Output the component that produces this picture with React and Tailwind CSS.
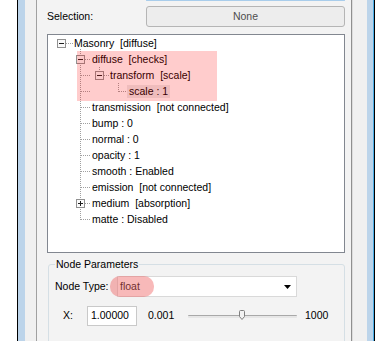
import React from "react";

const rows = [
  { lvl: 0, text: "Masonry  [diffuse]" },
  { lvl: 1, text: "diffuse  [checks]" },
  { lvl: 2, text: "transform  [scale]" },
  { lvl: 3, text: "scale : 1", selected: true },
  { lvl: 1, text: "transmission  [not connected]" },
  { lvl: 1, text: "bump : 0" },
  { lvl: 1, text: "normal : 0" },
  { lvl: 1, text: "opacity : 1" },
  { lvl: 1, text: "smooth : Enabled" },
  { lvl: 1, text: "emission  [not connected]" },
  { lvl: 1, text: "medium  [absorption]" },
  { lvl: 1, text: "matte : Disabled" },
];

const indent = ["pl-[24px]", "pl-[42px]", "pl-[60px]", "pl-[79px]"];

// expand / collapse box of the tree
const Box = ({ cx, cy, plus }) => (
  <g>
    <rect x={cx - 3.5} y={cy - 3.5} width="8" height="8" fill="#fafafa" stroke="#919191" />
    <line x1={cx - 2} x2={cx + 3} y1={cy + 0.5} y2={cy + 0.5} stroke="#1e1e1e" />
    {plus && <line x1={cx + 0.5} x2={cx + 0.5} y1={cy - 2} y2={cy + 3} stroke="#1e1e1e" />}
  </g>
);

const TreeLines = () => {
  const h = (x1, x2, y) => (
    <line key={`h${x1}-${y}`} x1={x1} x2={x2} y1={y + 0.5} y2={y + 0.5} />
  );
  const v = (x, y1, y2) => (
    <line key={`v${x}-${y1}`} x1={x + 0.5} x2={x + 0.5} y1={y1} y2={y2} />
  );
  const level1 = [];
  for (let i = 1; i < 12; i++) {
    const boxed = i === 1 || i === 10;
    level1.push(h(boxed ? 37 : 33, 43, 16 * i + 8));
  }
  return (
    <svg className="absolute left-0 top-0" width="296" height="217">
      <g stroke="#a0a0a0" strokeDasharray="1 1" shapeRendering="crispEdges">
        {h(18, 25, 8)}
        {v(32, 14, 185)}
        {level1}
        {v(51, 32, 41)}
        {h(56, 61, 40)}
        {v(70, 48, 57)}
        {h(71, 79, 56)}
      </g>
      <g shapeRendering="crispEdges">
        <Box cx={13} cy={8} />
        <Box cx={32} cy={24} />
        <Box cx={51} cy={40} />
        <Box cx={32} cy={168} plus />
      </g>
    </svg>
  );
};

const Thumb = () => (
  <svg className="absolute left-[51px] top-[4px]" width="7" height="10">
    <path
      d="M0.5 1.5 Q0.5 0.5 1.5 0.5 H4.5 Q5.5 0.5 5.5 1.5 V6.5 L3 9.5 L0.5 6.5 Z"
      fill="#f2f2f2"
      stroke="#7f7f7f"
    />
  </svg>
);

export default function App() {
  return (
    <div className="w-[387px] h-[341px] overflow-hidden flex bg-white text-black font-['Liberation_Sans',Arial,sans-serif] text-[10.5px]">
      <div className="w-[17px] shrink-0" />
      <div className="w-px shrink-0 bg-black" />
      <div className="w-[7px] shrink-0 bg-[#bcd4ea]" />
      <div className="w-[11px] shrink-0 bg-[#f0f0f0]" />
      <div className="w-px shrink-0 bg-[#a0a0a0]" />

      <div className="w-[314px] shrink-0 bg-[#f3f3f3] pl-[10px] pr-[6px] flex flex-col">
        <div className="ml-[99px] w-[199px] h-[3px] border-x border-b border-[#a9cdeb] rounded-b-[2px] bg-white" />

        <div className="mt-[5px] flex items-center h-[21px]">
          <span className="w-[99px]">Selection:</span>
          <div className="w-[199px] h-[21px] border border-[#b5b5b5] rounded-[3px] bg-[#ededed] flex items-center justify-center text-[#4d4d4d]">
            None
          </div>
        </div>

        <div className="mt-[7px] w-[298px] h-[219px] shrink-0 border border-[#828790] bg-white">
          <div className="relative">
            <TreeLines />
            <div className="relative">
              {rows.map((r, i) => (
                <div key={i} className={`h-[16px] flex items-center ${indent[r.lvl]}`}>
                  <span
                    className={`leading-[13px] px-[2px] whitespace-pre ${r.selected ? "bg-[#ececec]" : ""}`}
                  >
                    {r.text}
                  </span>
                </div>
              ))}
            </div>
            <div className="absolute left-[29px] top-[16px] w-[140px] h-[50px] bg-[rgba(255,0,0,0.2)] pointer-events-none" />
          </div>
        </div>

        <fieldset className="mt-[5px] ml-px w-[297px] h-[100px] shrink-0 border border-[#d5dfe5] rounded-[3px] pl-[6px]">
          <legend className="px-px leading-[13px]">Node Parameters</legend>

          <div className="mt-[5px] flex items-center h-[21px] relative">
            <span className="w-[62px]">Node Type:</span>
            <div className="w-[180px] h-[21px] border border-[#d9d9d9] bg-white flex items-center pl-[2px]">
              <span>float</span>
              <svg className="ml-auto mr-[5px]" width="7" height="4">
                <path d="M0 0 H7 L3.5 4 Z" fill="#000" />
              </svg>
            </div>
            <div className="absolute left-[55px] top-0 w-[44px] h-[21px] rounded-[10px] bg-[rgba(240,100,100,0.45)] pointer-events-none" />
          </div>

          <div className="mt-[9px] flex items-center h-[20px]">
            <span className="w-[32px] pl-[8px]">X:</span>
            <div className="w-[50px] h-[20px] border border-[#c9c9c9] bg-white flex items-center pl-[3px]">
              1.00000
            </div>
            <span className="ml-[11px] w-[29px]">0.001</span>
            <div className="ml-[11px] w-[109px] h-[20px] relative flex items-center">
              <div className="w-full h-[3px] border-t border-[#a8a8a8] bg-[#e6e6e6] rounded-[1px]" />
              <Thumb />
            </div>
            <span className="ml-[8px]">1000</span>
          </div>
        </fieldset>
      </div>

      <div className="w-px shrink-0 bg-[#8f8f8f]" />
      <div className="w-px shrink-0 bg-[#dcdcdc]" />
      <div className="w-[14px] shrink-0 bg-[#f0f0f0]" />
      <div className="w-[6px] shrink-0 bg-[#bcd4ea]" />
      <div className="w-px shrink-0 bg-[#4aaee6]" />
      <div className="w-px shrink-0 bg-black" />
      <div className="flex-1" />
    </div>
  );
}
